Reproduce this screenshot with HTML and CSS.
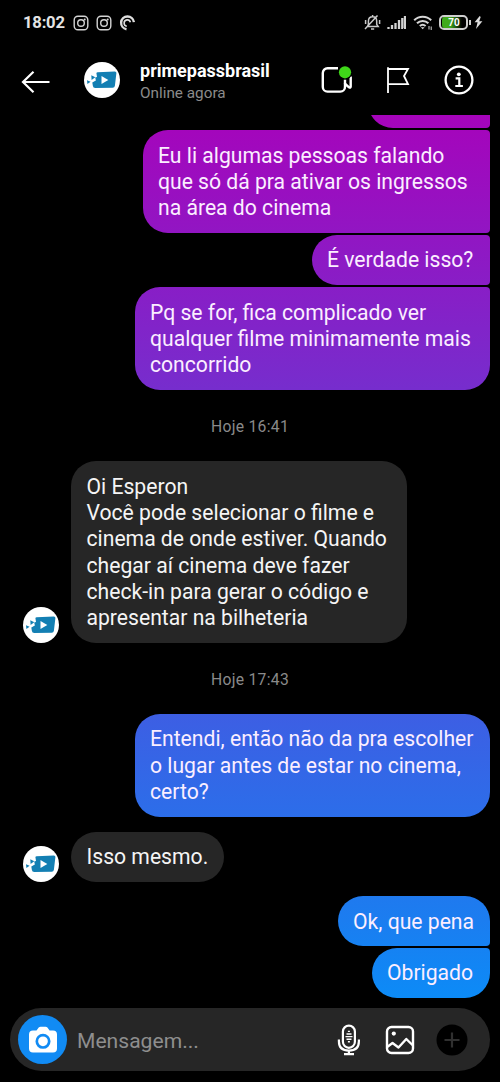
FILE: index.html
```html
<!DOCTYPE html>
<html lang="pt-BR">
<head>
<meta charset="utf-8">
<title>primepassbrasil</title>
<link rel="stylesheet" href="styles.css">
</head>
<body>
<svg class="defs" width="0" height="0" aria-hidden="true">
  <symbol id="insta" viewBox="0 0 16 16"><g fill="none" stroke="#d4d4d4" stroke-width="1.4"><rect x="1.2" y="1.2" width="13.6" height="13.6" rx="3.8"/><circle cx="8" cy="8" r="3.3"/></g><circle cx="11.7" cy="4.4" r="1" fill="#d4d4d4"/></symbol>
  <symbol id="brand" viewBox="0 0 36 36"><circle cx="18" cy="18" r="18" fill="#fff"/><path fill="#137fb3" d="M12.4 11q.3-.8 1.2-.8l17.2-.7q1.7 0 1.6 1.6l-1.5 12.6q-.3 2-2.2 2.1l-17.5.3q-2.1 0-2.3-2.1l-.6-3.4 3.6-2.1-.7-3 1.8-.5z"/><path fill="#137fb3" d="M7.3 13.3l4 2-3.7 2.7zM3 18.2l3.6 1.5L3.4 22z"/><path fill="#fff" d="M17.5 14v8l6.8-4z"/></symbol>
</svg>
<div class="phone">
  <header class="status">
    <span class="clock">18:02</span>
    <svg class="insta" width="16" height="16"><use href="#insta"/></svg>
    <svg class="insta" width="16" height="16"><use href="#insta"/></svg>
    <svg width="17" height="16" viewBox="0 0 17 16" fill="none" stroke="#dedede"><path stroke-width="2.4" d="M7.5 14.2A6.4 6.4 0 1 1 14.9 7.2"/><path stroke-width="1.6" d="M7.8 11.2a3.2 3.2 0 1 1 3.6-4"/></svg>
    <span class="spacer"></span>
    <svg class="mute" width="17" height="17" viewBox="0 0 17 17" fill="none" stroke="#c9c9c9" stroke-width="1.5"><path d="M3.5 12.5h10.7l-1.5-2.2V7.2c0-2.5-1.5-4.4-4.1-4.4S4.4 4.7 4.4 7.2v3.1zM7 15h3.2M1 15L13.5 1.5M8.6 1v2M1.6 6v4M15.6 6v4"/></svg>
    <svg class="signal" width="19" height="15" viewBox="0 0 19 15" stroke="#d2d2d2" stroke-width="2.3"><path d="M1.5 14v-2M5 14v-4M8.5 14V8M12 14V5M15.3 14V3M18 14V1"/></svg>
    <svg class="wifi" width="21" height="17" viewBox="0 0 21 17" fill="none" stroke="#d6d6d6" stroke-width="2"><path d="M1.2 6.2a12 12 0 0 1 17 0M4 9.3a8 8 0 0 1 11.4 0M6.8 12a4.4 4.4 0 0 1 5.8 0"/><path fill="#d6d6d6" stroke="none" d="M7.8 13.3h3.8l-1.9 2z"/><path stroke-width="1" d="M16 12v3.5M18.2 12.5V16"/></svg>
    <span class="battery">70</span><i class="battery-tip"></i>
    <svg class="bolt" width="9" height="15" viewBox="0 0 9 15"><path fill="#ddd" d="M5.7 1L.6 7.3h3L2 13.9l6.4-7.7H5.2L6.7 2z"/></svg>
  </header>
  <nav class="topbar">
    <svg class="back" width="30" height="24" viewBox="0 0 30 24" fill="none" stroke="#fff" stroke-width="2.2"><path d="M28.5 12H2M12.5 1.8L2 12l10.5 10.2"/></svg>
    <svg class="avatar" width="36" height="36"><use href="#brand"/></svg>
    <div class="who"><strong>primepassbrasil</strong><small>Online agora</small></div>
    <svg class="video" width="34" height="32" viewBox="0 0 34 32"><g fill="none" stroke="#fff" stroke-width="2.4" stroke-linejoin="round"><path d="M18 4.2H7.5a4.7 4.7 0 0 0-4.7 4.7v14a4.7 4.7 0 0 0 4.7 4.7h12.8a4.7 4.7 0 0 0 4.7-4.7v-3.2l4 3.6q1.7 1 1.7-.7V12.4"/><path d="M25 15.5v4.5"/></g><circle cx="25" cy="8.3" r="7.2" fill="#000"/><circle cx="25" cy="8.3" r="6.1" fill="#3fd719"/></svg>
    <svg class="flag" width="24" height="28" viewBox="0 0 24 28" fill="none" stroke="#fff" stroke-width="1.8"><path d="M2 1.2V27M2 3h20l-4 7 4 8.2H2"/></svg>
    <svg class="info" width="30" height="30" viewBox="0 0 30 30"><circle cx="15" cy="15" r="13.4" fill="none" stroke="#fff" stroke-width="2.3"/><circle cx="14.8" cy="9.3" r="1.9" fill="#fff"/><path fill="none" stroke="#fff" stroke-width="2.2" d="M11.6 13.3h3.7v7.5M11.3 21h7.6"/></svg>
  </nav>
  <main class="chat">
    <div class="cut"><div class="bubble out hidden-top"></div></div>
    <p class="bubble out first">Eu li algumas pessoas falando<br>que só dá pra ativar os ingressos<br>na área do cinema</p>
    <p class="bubble out mid verdade">É verdade isso?</p>
    <p class="bubble out last">Pq se for, fica complicado ver<br>qualquer filme minimamente mais<br>concorrido</p>
    <time class="stamp">Hoje 16:41</time>
    <div class="incoming">
      <svg width="36" height="36"><use href="#brand"/></svg>
      <p class="bubble in">Oi Esperon<br>Você pode selecionar o filme e<br>cinema de onde estiver. Quando<br>chegar aí cinema deve fazer<br>check-in para gerar o código e<br>apresentar na bilheteria</p>
    </div>
    <time class="stamp">Hoje 17:43</time>
    <p class="bubble out">Entendi, então não da pra escolher<br>o lugar antes de estar no cinema,<br>certo?</p>
    <div class="incoming reply">
      <svg width="36" height="36"><use href="#brand"/></svg>
      <p class="bubble in short">Isso mesmo.</p>
    </div>
    <p class="bubble out top pena">Ok, que pena</p>
    <p class="bubble out last obrigado">Obrigado</p>
  </main>
  <footer class="composer">
    <span class="camera"><svg width="30" height="28" viewBox="0 0 30 28"><path fill="#fff" d="M5 4.5h3.5l2.2-2.9Q11.5.8 12.6.8h5q1 0 1.8.8l2.2 2.9H25q4 0 4 4v14q0 4-4 4H5q-4 0-4-4v-14q0-4 4-4z"/><circle cx="15" cy="15.3" r="6.2" fill="none" stroke="#118bf4" stroke-width="2.7"/></svg></span>
    <span class="placeholder">Mensagem...</span>
    <svg class="mic" width="24" height="32" viewBox="0 0 24 32" fill="none" stroke="#fff"><rect x="5.9" y="1.6" width="12" height="22.2" rx="6" stroke-width="2.2"/><path stroke-width="2.2" d="M1.9 15.5v1.8c0 6.6 4 9.4 10 9.4s10-2.8 10-9.4v-1.8M11.9 26.7V30M7 30.2h10"/><path stroke-width="1.4" d="M10.9 7.4h2M9.5 10h5M8.5 12.6h7M9.5 15.2h5M10.9 17.8h2"/></svg>
    <svg class="photo" width="30" height="30" viewBox="0 0 30 30"><g fill="none" stroke="#fff" stroke-width="2.4" stroke-linejoin="round"><rect x="2" y="2" width="26" height="26" rx="4.5"/><path d="M2.5 21.7l5-3.7 6 4.5L21.3 14l6.7 6.5"/></g><circle cx="8.8" cy="8.6" r="2.1" fill="#fff"/></svg>
    <svg class="plus" width="32" height="32" viewBox="0 0 32 32"><circle cx="16" cy="16" r="15.5" fill="#000"/><path stroke="#303030" stroke-width="2.2" d="M16 8.5v15M8.5 16h15"/></svg>
  </footer>
</div>
</body>
</html>
```
FILE: styles.css
```css
* { box-sizing: border-box; }
body { margin: 0; background: #000; color: #fff; font-family: Roboto, "Liberation Sans", sans-serif; }
svg { display: block; flex: none; }
.defs { position: absolute; }
.phone { width: 500px; height: 1082px; display: flex; flex-direction: column; overflow: hidden; background: #000; }

.status { height: 45px; display: flex; align-items: center; padding: 0 17px 0 23px; }
.clock { width: 50px; font-size: 16.6px; font-weight: 700; line-height: 20px; color: #e4e4e4; letter-spacing: -.2px; white-space: nowrap; }
.insta { margin-right: 7px; }
.spacer { flex: 1; }
.mute { margin-right: 6px; }
.signal { margin-right: 7px; }
.wifi { margin-right: 5px; }
.battery { width: 29px; height: 15px; border: 2px solid #cecece; border-radius: 5px; padding-left: 1px; background: linear-gradient(90deg, #3faa1c 8px, #000 20px) content-box; font-size: 10px; line-height: 11px; font-weight: 700; text-align: center; }
.battery-tip { width: 2px; height: 5px; margin: 0 3px 0 1px; background: #cecece; }

.topbar { height: 70px; display: flex; align-items: flex-start; padding: 17px 25px 0 21px; }
.back { margin: 8px 33px 0 0; }
.who { width: 200px; display: flex; flex-direction: column; margin-left: 20px; margin-top: -2px; }
.who strong { font-size: 18px; line-height: 22px; font-weight: 700; white-space: nowrap; }
.who small { font-size: 15.3px; line-height: 20px; margin-top: 1px; color: #8b8b8b; }
.video { margin: 2px 30px 0 -20px; }
.flag { margin: 4px 34px 0 2px; }
.info { margin-top: 3px; }

.chat { height: 893px; display: flex; flex-direction: column; align-items: flex-end; padding: 0 10px; }
.bubble { margin: 0; width: 355px; padding: 12.6px 15px 11.4px; border-radius: 25px; font-size: 21.15px; line-height: 26.3px; white-space: nowrap; flex: none; }
.out { background: linear-gradient(180deg, #a604bb 115px, #792bcc 375px, #3b60e4 725px, #1b7df0 920px, #0c8bf7 998px) fixed; color: #fbeeff; }
.cut { width: 122px; height: 13px; margin-bottom: 2px; overflow: hidden; display: flex; align-items: flex-end; flex: none; }
.hidden-top { width: 122px; height: 50px; border-radius: 25px 4px 4px 25px; }
.first { width: 347px; border-radius: 25px 4px 4px 25px; margin-bottom: 2px; }
.mid { border-radius: 25px 4px 4px 25px; margin-bottom: 2px; }
.verdade { width: 178px; }
.last { border-radius: 25px 4px 25px 25px; }
.top { border-radius: 25px 25px 4px 25px; }
.stamp { align-self: center; margin: 26px 0 24px; font-size: 15.7px; line-height: 21px; color: #8a8a8a; letter-spacing: .3px; }
.incoming { align-self: stretch; display: flex; align-items: flex-end; gap: 12px; padding-left: 13px; }
.in { width: 336px; background: #262626; color: #f5f5f5; padding-left: 15.5px; }
.short { width: 153px; }
.reply { margin: 15px 0 14px; }
.pena { width: 152px; margin-bottom: 1.5px; }
.obrigado { width: 118px; }

.composer { height: 63px; margin: 0 10px; padding: 0 22px 0 8px; border-radius: 32px; background: #262626; display: flex; align-items: center; }
.camera { width: 49px; height: 49px; border-radius: 50%; background: #118bf4; display: grid; place-items: center; flex: none; }
.placeholder { margin-left: 10px; width: 261px; padding-top: 2px; font-size: 21.1px; color: #8e8e8e; }
.mic { margin-right: 24px; }
.photo { margin-right: 21px; }
```
